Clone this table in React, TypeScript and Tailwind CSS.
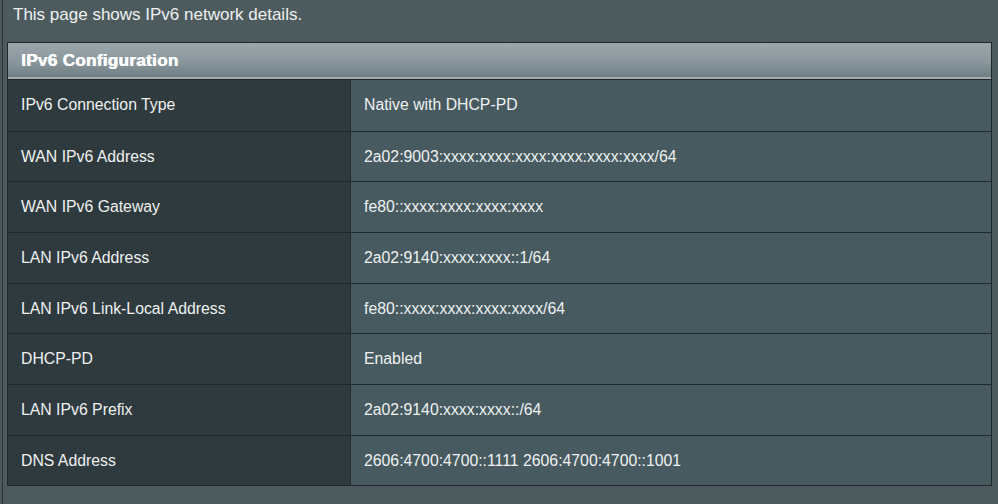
const rows: { label: string; value: string }[] = [
  { label: 'IPv6 Connection Type', value: 'Native with DHCP-PD' },
  { label: 'WAN IPv6 Address', value: '2a02:9003:xxxx:xxxx:xxxx:xxxx:xxxx:xxxx/64' },
  { label: 'WAN IPv6 Gateway', value: 'fe80::xxxx:xxxx:xxxx:xxxx' },
  { label: 'LAN IPv6 Address', value: '2a02:9140:xxxx:xxxx::1/64' },
  { label: 'LAN IPv6 Link-Local Address', value: 'fe80::xxxx:xxxx:xxxx:xxxx/64' },
  { label: 'DHCP-PD', value: 'Enabled' },
  { label: 'LAN IPv6 Prefix', value: '2a02:9140:xxxx:xxxx::/64' },
  { label: 'DNS Address', value: '2606:4700:4700::1111 2606:4700:4700::1001' },
];

export default function App() {
  return (
    <div className="h-[504px] w-[998px] overflow-hidden bg-[#4b585c] pl-[2px] font-['Liberation_Sans',Arial,sans-serif]">
      <div className="h-full border-l border-[#2a3336] bg-[#4d5a5e] pl-[4px] pr-[6px]">
        <p className="pl-[6px] pt-[4px] text-[17px] leading-[22px] text-[#eef1f1]">
          This page shows IPv6 network details.
        </p>

        <div className="mt-[16px] border border-[#1e282b]">
          <div className="h-[37px] border-b border-[#1e282b] bg-gradient-to-b from-[#9ba6ab] via-[#8b989d] to-[#6c7c82] shadow-[inset_0_-2px_0_#a3adb0]">
            <div className="flex h-full items-center pl-[13px] text-[17px] font-bold tracking-[0.35px] text-white [text-shadow:0.6px_0_0_#fff]">
              IPv6 Configuration
            </div>
          </div>

          {rows.map((row, i) => (
            <div
              key={row.label}
              className={`flex h-[50.67px] text-[15.8px] text-[#eef1f1] ${i > 0 ? 'border-t border-[#212b2e]' : ''}`}
            >
              <div className="flex w-[343px] shrink-0 items-center border-r border-[#252f32] bg-[#2f3a3e] pl-[13px]">
                {row.label}
              </div>
              <div className="flex flex-1 items-center bg-[#475a5f] pl-[13px]">{row.value}</div>
            </div>
          ))}
        </div>
      </div>
    </div>
  );
}
